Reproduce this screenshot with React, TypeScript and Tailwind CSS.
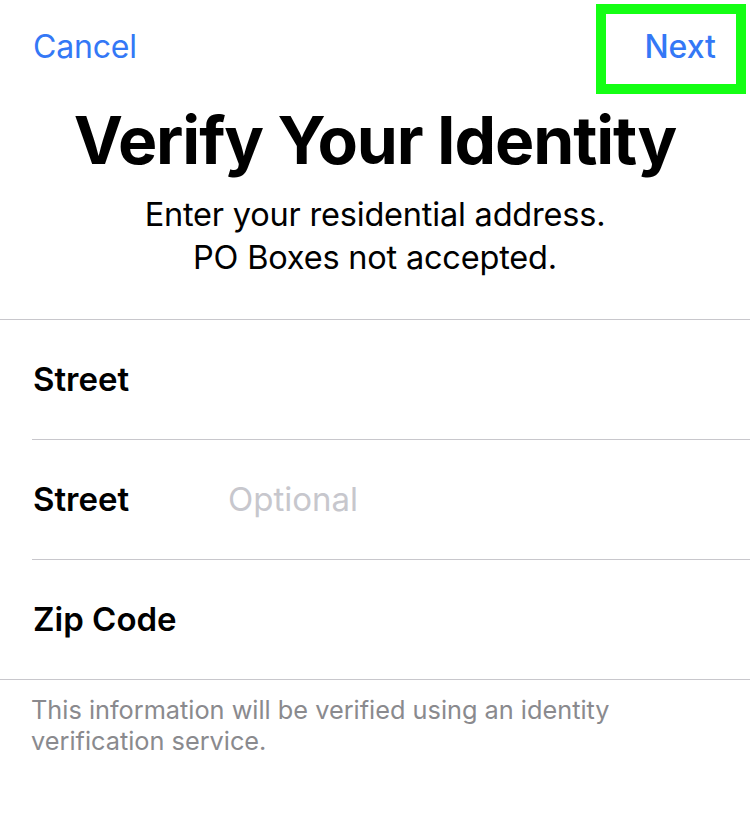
import { useState } from "react";

const FIELDS = [
  { label: "Street", placeholder: "" },
  { label: "Street", placeholder: "Optional" },
  { label: "Zip Code", placeholder: "" },
];

export default function App() {
  const [values, setValues] = useState<string[]>(["", "", ""]);

  return (
    <main className="relative min-h-[813px] w-[750px] bg-white font-['Inter','Liberation_Sans',sans-serif] text-black">
      {/* nav bar */}
      <header className="flex h-[94px] items-center justify-between pl-[33px] pr-[34px]">
        <button className="text-[32px] leading-[40px] tracking-[-0.2px] text-[#3478f6]">Cancel</button>
        <div className="relative">
          <button className="text-[32px] font-medium leading-[40px] text-[#3478f6]">Next</button>
          {/* highlight annotation */}
          <div className="pointer-events-none absolute -left-[48px] -right-[30px] -top-[23px] -bottom-[27px] border-[10px] border-[#14ff14]" />
        </div>
      </header>

      <section className="flex flex-col items-center pt-[6px] text-center">
        <h1 className="text-[66px] font-bold leading-[80px] tracking-[-1.1px]">Verify Your Identity</h1>
        <p className="mt-[13px] text-[32.5px] leading-[43px] tracking-[-0.2px]">
          Enter your residential address.
          <br />
          PO Boxes not accepted.
        </p>
      </section>

      <section className="mt-[40px] border-y border-[#c8c7cc]">
        {FIELDS.map((f, i) => (
          <div key={i} className={i < FIELDS.length - 1 ? "ml-[32px] border-b border-[#c8c7cc]" : "ml-[32px]"}>
            <label className="flex h-[119px] items-center">
              <span className="w-[196px] shrink-0 pl-[1px] text-[33px] font-semibold">{f.label}</span>
              <input
                value={values[i]}
                placeholder={f.placeholder}
                onChange={(e) => setValues((v) => v.map((x, j) => (j === i ? e.target.value : x)))}
                className="min-w-0 flex-1 bg-transparent text-[33px] outline-none placeholder:text-[#c7c7cd]"
              />
            </label>
          </div>
        ))}
      </section>

      <p className="px-[31px] pt-[14px] text-[25.3px] leading-[31px] text-[#8a8a8e]">
        This information will be verified using an identity verification service.
      </p>
    </main>
  );
}
